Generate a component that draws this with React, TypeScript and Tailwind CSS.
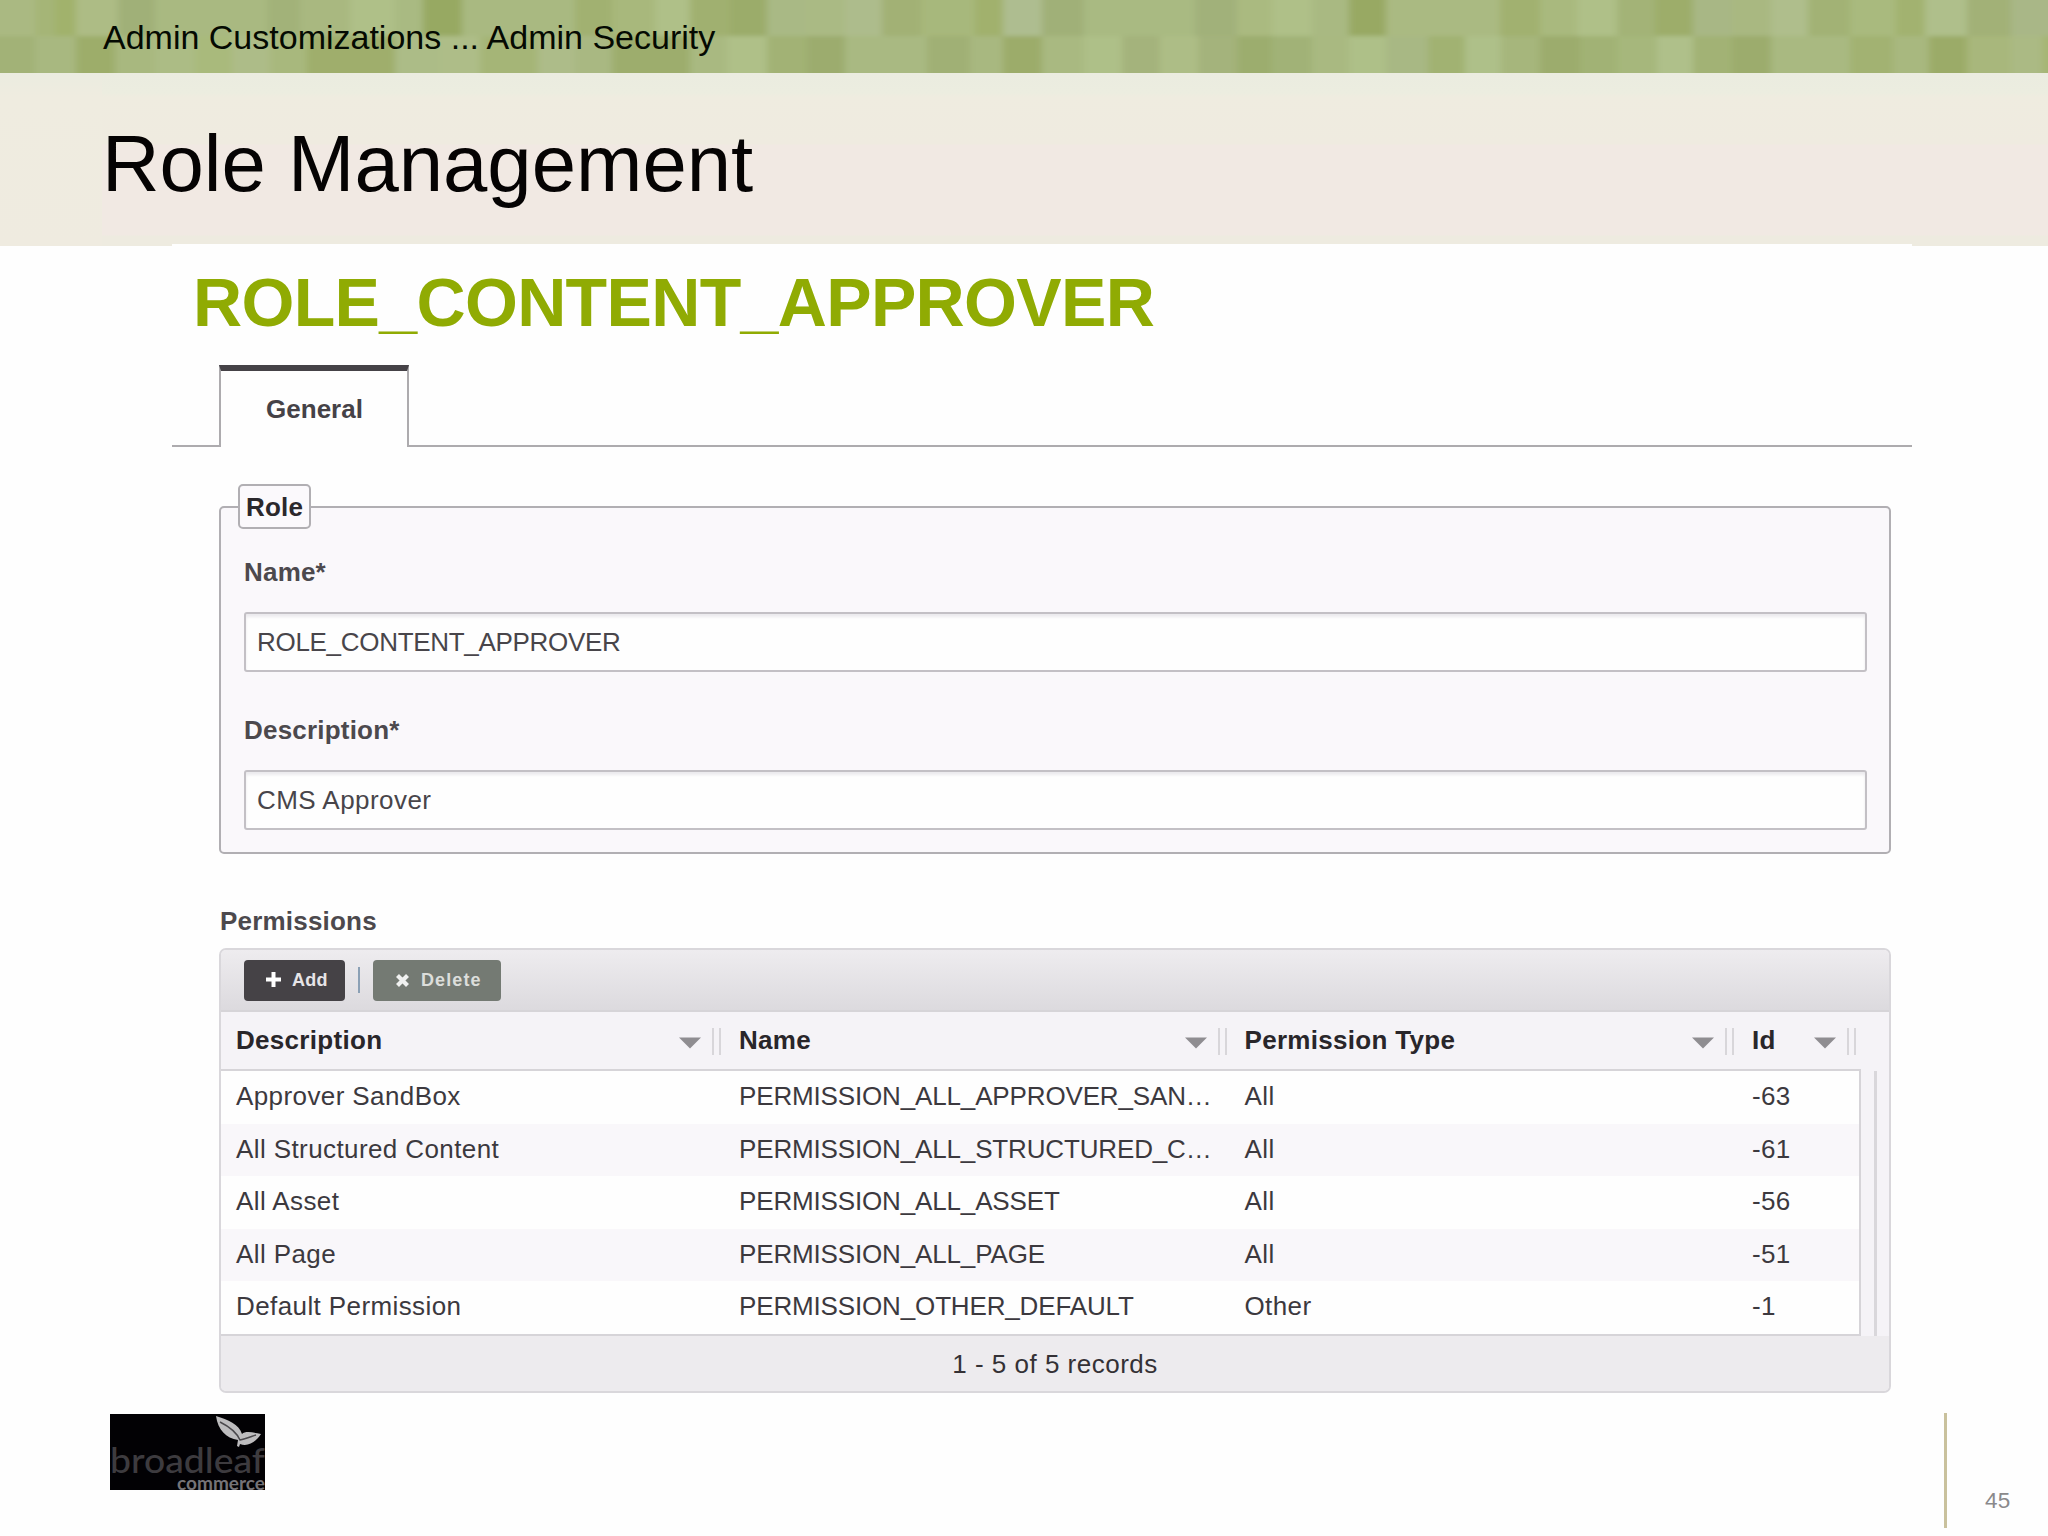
interface Permission {
  description: string;
  name: string;
  type: string;
  id: string;
}

const permissions: Permission[] = [
  { description: 'Approver SandBox', name: 'PERMISSION_ALL_APPROVER_SAN…', type: 'All', id: '-63' },
  { description: 'All Structured Content', name: 'PERMISSION_ALL_STRUCTURED_C…', type: 'All', id: '-61' },
  { description: 'All Asset', name: 'PERMISSION_ALL_ASSET', type: 'All', id: '-56' },
  { description: 'All Page', name: 'PERMISSION_ALL_PAGE', type: 'All', id: '-51' },
  { description: 'Default Permission', name: 'PERMISSION_OTHER_DEFAULT', type: 'Other', id: '-1' },
];

// [start x, colour], each tile runs up to the next one
const topTiles: Array<[number, string]> = [
  [-20, '#aab982'], [35, '#a5b577'], [55, '#a1b26c'], [76, '#adbc85'], [118, '#a0b078'], [155, '#a9b981'],
  [267, '#a2b279'], [300, '#a9b880'], [350, '#afc088'], [395, '#a9ba82'], [423, '#97a962'], [462, '#a9b981'],
  [575, '#a1b171'], [612, '#a8b87c'], [655, '#afc088'], [690, '#a0b070'], [730, '#9bac6b'], [767, '#a9b985'],
  [806, '#aaba84'], [845, '#adbc8c'], [882, '#a2b174'], [921, '#a7b87b'], [975, '#a1b16d'], [1003, '#aebd90'],
  [1042, '#a0b078'], [1084, '#a9ba82'], [1195, '#a1b17a'], [1237, '#aaba80'], [1272, '#afc088'], [1312, '#a9b982'],
  [1349, '#98a964'], [1386, '#aaba82'], [1500, '#a1b16f'], [1540, '#a9b97e'], [1577, '#afc088'], [1617, '#a3b377'],
  [1655, '#9dad6b'], [1693, '#a8b785'], [1732, '#a9b881'], [1771, '#afbe8c'], [1808, '#a2b274'], [1850, '#a9ba7e'],
  [1896, '#a2b26f'], [1925, '#afbf8b'], [1967, '#a2b177'], [2011, '#a9b787'],
];

const bottomTiles: Array<[number, string]> = [
  [-20, '#a2b277'], [35, '#a8b880'], [76, '#9dad6b'], [115, '#a8b87f'], [155, '#acbc85'], [195, '#a9ba7c'],
  [232, '#adbc88'], [270, '#a8b87d'], [307, '#9fae6c'], [395, '#acbc87'], [440, '#aebd88'], [480, '#a5b577'],
  [538, '#adbc89'], [575, '#a9b882'], [612, '#9dad6d'], [690, '#a9b981'], [727, '#afc088'], [767, '#a2b274'],
  [807, '#9cac6e'], [845, '#a9b982'], [927, '#a0b074'], [970, '#a8b880'], [1003, '#9cac6b'], [1042, '#a9b981'],
  [1084, '#aec088'], [1122, '#a4b37b'], [1160, '#adbd86'], [1198, '#a4b37c'], [1237, '#9cad6e'], [1272, '#a1b277'],
  [1312, '#a9b981'], [1349, '#aec088'], [1386, '#a8b884'], [1428, '#a1b272'], [1465, '#aec089'], [1501, '#a6b67b'],
  [1540, '#9cac6d'], [1580, '#a1b274'], [1617, '#a6b77c'], [1657, '#afc08a'], [1693, '#a2b274'], [1732, '#9cac6d'],
  [1771, '#a9b981'], [1850, '#a2b272'], [1893, '#a8b87f'], [1929, '#9bab67'], [1967, '#a8b77c'], [2011, '#abba84'],
  [2042, '#a5b575'],
];

function Mosaic() {
  return (
    <svg className="absolute inset-0" width="2048" height="73" viewBox="0 0 2048 73">
      <defs>
        <filter id="soften">
          <feGaussianBlur stdDeviation="3.5 2" />
        </filter>
      </defs>
      {/* tiles bleed past the band so the blur never reaches its edges */}
      <g filter="url(#soften)">
        {topTiles.map(([x, fill], i) => (
          <rect key={x} x={x} y="-20" width={(topTiles[i + 1]?.[0] ?? 2068) - x} height="56" fill={fill} />
        ))}
        {bottomTiles.map(([x, fill], i) => (
          <rect key={x} x={x} y="36" width={(bottomTiles[i + 1]?.[0] ?? 2068) - x} height="57" fill={fill} />
        ))}
      </g>
    </svg>
  );
}

function Field({ label, value, tracking }: { label: string; value: string; tracking: string }) {
  return (
    <div>
      <div className="h-[40px] text-[26px] font-bold leading-[41px] tracking-[0.2px] text-[#4c494d]">{label}</div>
      <div
        className={`mt-[20px] flex h-[60px] items-center rounded-[3px] border-2 border-[#c3c0c5] bg-[#fefefe] pl-[11px] text-[26px] text-[#48454a] shadow-[inset_0_3px_3px_#ecebee] ${tracking}`}
      >
        {value}
      </div>
    </div>
  );
}

function HeaderCell({ children }: { children: string }) {
  return (
    <div className="flex h-full items-center pr-[18px] last:pr-0">
      <span className="flex-1 text-[26px] font-bold leading-[57px] tracking-[0.3px] text-[#29262a]">{children}</span>
      <svg className="mt-[4px]" width="22" height="12" viewBox="0 0 22 12">
        <path d="M0 0.5H22L11 11.5Z" fill="#8f8d91" />
      </svg>
      <div className="ml-[11px] mt-[2px] h-[27px] w-[9px] border-x-2 border-[#d8d6da]" />
    </div>
  );
}

function Logo() {
  return (
    <svg width="155" height="76" viewBox="0 0 155 76">
      <rect width="155" height="76" fill="#020104" />
      <path d="M106 2C118 6 129 10 132 20C135 17 142 18 151 20C146 28 138 33 130 30L129 33L127 32L128 26C116 24 108 16 106 2Z" fill="#bdbcbe" />
      <path d="M110 8C118 12 126 17 130 26C135 25 140 23 146 21" fill="none" stroke="#4a484c" strokeWidth="1.5" />
      <text x="0" y="58.5" textLength="155" lengthAdjust="spacingAndGlyphs" fontFamily="Lato, sans-serif" fontSize="35" fontWeight="500" fill="#3d3b3f">
        broadleaf
      </text>
      <text x="67" y="75.5" textLength="88" lengthAdjust="spacingAndGlyphs" fontFamily="Lato, sans-serif" fontSize="18" fontWeight="bold" fill="#757377">
        commerce
      </text>
    </svg>
  );
}

const columns = 'grid grid-cols-[503px_505.5px_507.5px_104px] pl-[15px]';

export default function App() {
  return (
    <div className="h-[1536px] w-[2048px] overflow-hidden bg-[#fefefe] font-['Liberation_Sans',Arial,sans-serif]">
      {/* Breadcrumb band */}
      <header className="relative h-[73px] pl-[103px]">
        <Mosaic />
        <span className="relative block whitespace-pre text-[34px] leading-[75px] text-[#050a02]">Admin Customizations ... Admin Security</span>
      </header>

      {/* Slide title */}
      <div className="flex h-[173px] bg-[linear-gradient(#ebece0_0,#ecede0_20px,#efece0_24px,#efebe0_71px,#f1e9e3_72px,#f1e9e3_162px,#eeebe0_163px)]">
        <div className="w-[102px] bg-[linear-gradient(#ebece0_0,#efece0_24px,#efebe0_100%)]" />
        <h1 className="text-[79.7px] leading-[182px] text-[#050303]">Role Management</h1>
      </div>

      {/* Role editor */}
      <main className="relative ml-[172px] mt-[-2px] h-[1150px] w-[1740px] bg-[#fefefe]">
        <h2 className="h-[121px] pl-[21px] text-[68px] font-bold leading-[117px] tracking-[-0.65px] text-[#90ab03]">ROLE_CONTENT_APPROVER</h2>

        <div className="flex h-[82px]">
          <div className="w-[47px] border-b-2 border-[#adabae]" />
          <div className="w-[190px] border-x-2 border-t-[6px] border-x-[#adabae] border-t-[#454247] pl-px text-center text-[26px] font-bold leading-[76px] text-[#454247]">
            General
          </div>
          <div className="flex-1 border-b-2 border-[#adabae]" />
        </div>

        <section className="relative ml-[47px] mt-[59px] h-[348px] w-[1672px] rounded-[5px] border-2 border-[#b1afb3] bg-[#faf8fb] pl-[23px] pr-[22px] pt-[44px]">
          <div className="absolute left-[17px] top-[-24px] h-[45px] w-[73px] rounded-[5px] border-2 border-[#b1afb3] bg-[#fbf9fc] text-center text-[26px] font-bold leading-[42px] tracking-[0.2px] text-[#2b282c]">
            Role
          </div>
          <div className="flex flex-col gap-[38px]">
            <Field label="Name*" value="ROLE_CONTENT_APPROVER" tracking="tracking-[-0.3px]" />
            <Field label="Description*" value="CMS Approver" tracking="tracking-[0.45px]" />
          </div>
        </section>

        <div className="ml-[48px] mt-[47px] h-[47px] text-[26px] font-bold leading-[41px] tracking-[0.2px] text-[#4c494d]">Permissions</div>

        <section className="ml-[47px] h-[445px] w-[1672px] overflow-hidden rounded-[7px] border-2 border-[#d9d7db] bg-[#f5f3f7]">
          <div className="flex h-[62px] items-center border-b-2 border-[#d6d4d8] bg-linear-to-b from-[#eeecef] to-[#dcdade] pl-[23px]">
            <button className="flex h-[41px] w-[101px] items-center rounded-[4px] bg-[#454246] pl-[22px] text-[18px] font-bold text-[#e6e4e7]">
              <svg className="mb-[2px]" width="15" height="15" viewBox="0 0 15 15">
                <path d="M5.5 0H9.5V5.5H15V9.5H9.5V15H5.5V9.5H0V5.5H5.5Z" fill="#fff" />
              </svg>
              <span className="ml-[11px] tracking-[0.2px]">Add</span>
            </button>
            <div className="ml-[13px] h-[26px] w-[2px] bg-[#8ba0b5]" />
            <button className="ml-[13px] flex h-[41px] w-[128px] items-center rounded-[4px] bg-[#747a73] pl-[23px] text-[18px] font-bold text-[#dcdedb]">
              <svg width="13" height="13" viewBox="0 0 13 13">
                <path d="M1.5 1.5L11.5 11.5M11.5 1.5L1.5 11.5" stroke="#f0f1f0" strokeWidth="4.2" />
              </svg>
              <span className="ml-[12px] tracking-[1.1px]">Delete</span>
            </button>
          </div>

          <div className={`${columns} h-[57px]`}>
            <HeaderCell>Description</HeaderCell>
            <HeaderCell>Name</HeaderCell>
            <HeaderCell>Permission Type</HeaderCell>
            <HeaderCell>Id</HeaderCell>
          </div>

          <div className="flex h-[267px]">
            <div className="w-[1640px] border-y-2 border-r-2 border-[#d6d4d8] bg-[#fefefe]">
              {permissions.map((row) => (
                <div key={row.id} className={`${columns} h-[52.6px] text-[26px] leading-[51.4px] text-[#3c393e] even:bg-[#f9f7fa]`}>
                  <span className="tracking-[0.4px]">{row.description}</span>
                  <span className="tracking-[-0.15px]">{row.name}</span>
                  <span className="tracking-[0.4px]">{row.type}</span>
                  <span className="tracking-[0.3px]">{row.id}</span>
                </div>
              ))}
            </div>
            <div className="ml-[13px] mt-[2px] w-[3px] bg-[#d9d7db]" />
          </div>

          <div className="h-[58px] bg-[#edebee] text-center text-[26px] leading-[57px] tracking-[0.5px] text-[#343135]">1 - 5 of 5 records</div>
        </section>
      </main>

      {/* Footer */}
      <footer className="relative mt-[19px] flex h-[123px] pl-[110px]">
        <div className="mt-px">
          <Logo />
        </div>
        <div className="ml-[1679px] h-[115px] w-[3px] bg-[#c9c19d]" />
        <span className="ml-[38px] mt-[75px] text-[22.5px] leading-[26px] tracking-[0.3px] text-[#8a898b]">45</span>
      </footer>
    </div>
  );
}
